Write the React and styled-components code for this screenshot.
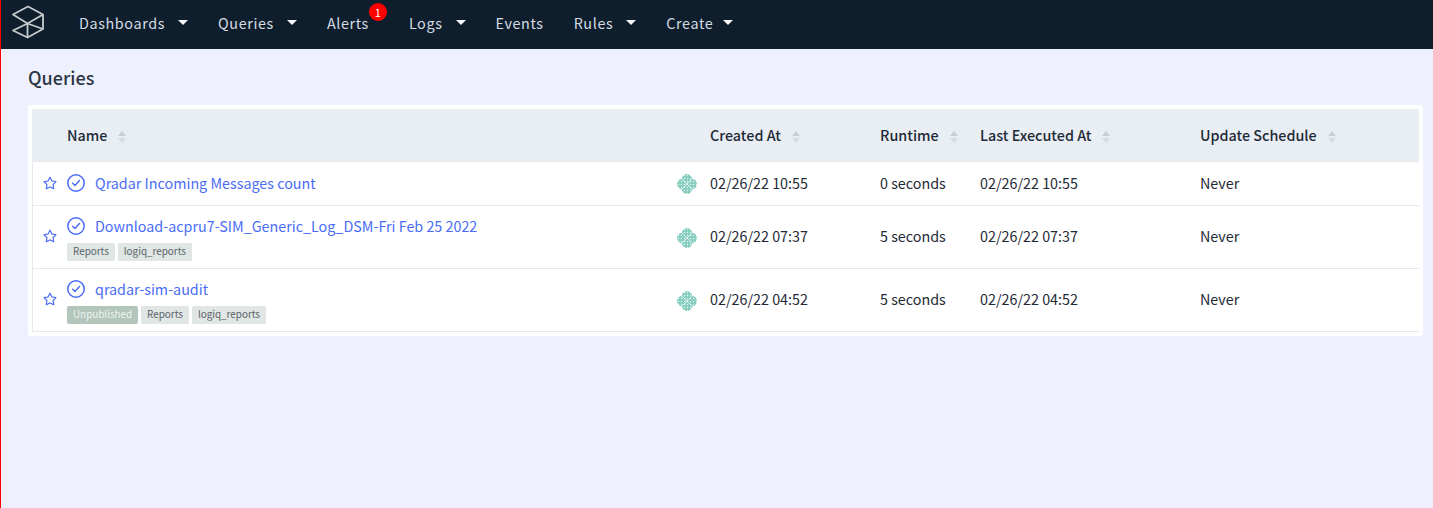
import styled, { createGlobalStyle } from "styled-components";
import { FaRegStar } from "react-icons/fa";

const GlobalStyle = createGlobalStyle`
  html, body {
    margin: 0;
    padding: 0;
    height: 100%;
  }
  body {
    background: #eef1fd;
    font-family: "Noto Sans CJK JP", "Noto Sans", sans-serif;
  }
`;

const menu = [
  { label: "Dashboards", caret: 13 },
  { label: "Queries", caret: 13 },
  { label: "Alerts", badge: 1 },
  { label: "Logs", caret: 13 },
  { label: "Events" },
  { label: "Rules", caret: 13 },
  { label: "Create", caret: 10 },
];

const queries = [
  {
    name: "Qradar Incoming Messages count",
    tags: [],
    created: "02/26/22 10:55",
    runtime: "0 seconds",
    executed: "02/26/22 10:55",
  },
  {
    name: "Download-acpru7-SIM_Generic_Log_DSM-Fri Feb 25 2022",
    tags: ["Reports", "logiq_reports"],
    created: "02/26/22 07:37",
    runtime: "5 seconds",
    executed: "02/26/22 07:37",
  },
  {
    name: "qradar-sim-audit",
    unpublished: true,
    tags: ["Reports", "logiq_reports"],
    created: "02/26/22 04:52",
    runtime: "5 seconds",
    executed: "02/26/22 04:52",
  },
];

function Logo() {
  return (
    <LogoSvg viewBox="0 0 34 34" fill="none" stroke="#c4cacd" strokeWidth="1.800" strokeLinejoin="round">
      <path d="M17 1.500 L32 9.500 L16.500 18.500 L2 9.500 Z" />
      <path d="M16.500 18.500 L2 25.500 L16.500 32.500 L32 24 L32 9.500" />
      <path d="M16.500 18.500 L16.500 32.500 M16.500 18.500 L32 24" />
    </LogoSvg>
  );
}

function SortIcon() {
  return (
    <SortSvg viewBox="0 0 8 12">
      <path d="M4 0 L8 5 L0 5 Z" fill="#c8ced6" />
      <path d="M0 7 L8 7 L4 12 Z" fill="#d6dbe1" />
    </SortSvg>
  );
}

function CheckCircle() {
  return (
    <CheckSvg viewBox="0 0 18 18" fill="none" stroke="#4a6cf7" strokeLinecap="round" strokeLinejoin="round">
      <circle cx="9" cy="9" r="8.200" strokeWidth="1.500" />
      <path d="M5.600 9.300 L8 11.500 L12.400 6.500" strokeWidth="1.400" />
    </CheckSvg>
  );
}

function Avatar() {
  return (
    <AvatarSvg viewBox="0 0 20 20">
      <defs>
        <pattern id="avatar-dots" width="3" height="3" patternUnits="userSpaceOnUse">
          <rect width="3" height="3" fill="#85cdbf" />
          <circle cx="1.500" cy="1.500" r="0.700" fill="#eaf6f3" />
        </pattern>
      </defs>
      <g fill="url(#avatar-dots)">
        <circle cx="10" cy="5.200" r="5.200" />
        <circle cx="10" cy="14.800" r="5.200" />
        <circle cx="5.200" cy="10" r="5.200" />
        <circle cx="14.800" cy="10" r="5.200" />
      </g>
      <path d="M4.500 4.500 L15.500 15.500 M15.500 4.500 L4.500 15.500" stroke="#fff" strokeWidth="0.700" />
    </AvatarSvg>
  );
}

export default function App() {
  return (
    <Page>
      <GlobalStyle />
      <Navbar>
        <Logo />
        <Menu>
          {menu.map((item) => (
            <MenuItem key={item.label} $badged={!!item.badge}>
              {item.label}
              {item.caret && <Caret $gap={item.caret} />}
              {item.badge && <Badge>{item.badge}</Badge>}
            </MenuItem>
          ))}
        </Menu>
      </Navbar>
      <Content>
        <PageTitle>Queries</PageTitle>
        <Card>
          <Table>
            <colgroup>
              <Col $width={35} />
              <col />
              <Col $width={170} />
              <Col $width={100} />
              <Col $width={220} />
              <Col $width={219} />
            </colgroup>
            <thead>
              <tr>
                <Th />
                <Th>Name<SortIcon /></Th>
                <Th>Created At<SortIcon /></Th>
                <Th>Runtime<SortIcon /></Th>
                <Th>Last Executed At<SortIcon /></Th>
                <Th>Update Schedule<SortIcon /></Th>
              </tr>
            </thead>
            <tbody>
              {queries.map((q) => {
                const hasTags = q.unpublished || q.tags.length > 0;
                return (
                  <Row key={q.name}>
                    <StarCell><FaRegStar /></StarCell>
                    <NameCell>
                      <NameInner>
                        <NameBlock $single={!hasTags}>
                          <TitleLine>
                            <CheckCircle />
                            <QueryLink>{q.name}</QueryLink>
                          </TitleLine>
                          {hasTags && (
                            <Tags>
                              {q.unpublished && <Tag $muted>Unpublished</Tag>}
                              {q.tags.map((t) => <Tag key={t}>{t}</Tag>)}
                            </Tags>
                          )}
                        </NameBlock>
                        <Avatar />
                      </NameInner>
                    </NameCell>
                    <Td>{q.created}</Td>
                    <Td>{q.runtime}</Td>
                    <Td>{q.executed}</Td>
                    <Td>Never</Td>
                  </Row>
                );
              })}
            </tbody>
          </Table>
        </Card>
      </Content>
    </Page>
  );
}

const Page = styled.div`
  min-height: 508px;
  border-left: 1px solid #ff0000;
  box-sizing: border-box;
`;

const Navbar = styled.nav`
  height: 49px;
  background: #0f1e2d;
  display: flex;
  align-items: flex-start;
  padding-left: 10px;
  box-sizing: border-box;
`;

const LogoSvg = styled.svg`
  width: 34px;
  height: 34px;
  margin-top: 5px;
`;

const Menu = styled.ul`
  display: flex;
  list-style: none;
  margin: 0 0 0 34px;
  padding: 0;
  gap: 30px;
`;

const MenuItem = styled.li`
  position: relative;
  display: flex;
  align-items: center;
  height: 44px;
  padding-right: ${(p) => (p.$badged ? "10px" : "0")};
  color: #d5dce3;
  font-size: 14.4px;
  letter-spacing: 0.6px;
`;

const Caret = styled.span`
  width: 0;
  height: 0;
  margin: 1px 0 0 ${(p) => p.$gap}px;
  border-left: 5.5px solid transparent;
  border-right: 5.5px solid transparent;
  border-top: 5.5px solid #f4f6f8;
`;

const Badge = styled.span`
  position: absolute;
  top: 3px;
  right: -8px;
  width: 18px;
  height: 18px;
  border-radius: 50%;
  background: #ff0000;
  color: #fff;
  font-size: 11px;
  letter-spacing: 0;
  line-height: 18px;
  text-align: center;
`;

const Content = styled.main`
  padding: 0 10px 0 27px;
`;

const PageTitle = styled.h1`
  margin: 0;
  padding-top: 15px;
  height: 41px;
  font-size: 18px;
  font-weight: 500;
  line-height: 26px;
  color: #2b3544;
`;

const Card = styled.div`
  background: #fff;
  border-radius: 3px;
  padding: 4px;
`;

const Table = styled.table`
  width: 100%;
  table-layout: fixed;
  border-collapse: separate;
  border-spacing: 0;
`;

const Col = styled.col`
  width: ${(p) => p.$width}px;
`;

const Th = styled.th`
  height: 50px;
  padding: 0 0 2px;
  background: #e9eef5;
  border-bottom: 1px solid #e6e8ec;
  text-align: left;
  font-size: 14.34px;
  font-weight: 500;
  color: #1f2a37;
`;

const SortSvg = styled.svg`
  width: 8px;
  height: 12px;
  margin-left: 11px;
  vertical-align: -2px;
`;

const Row = styled.tr`
  td {
    border-bottom: 1px solid #e6e8ec;
  }
`;

const Td = styled.td`
  padding: 0 0 3px;
  font-size: 14.34px;
  color: #1f2a37;
`;

const StarCell = styled.td`
  padding: 0 0 2px 10px;
  color: #4a6cf7;
  line-height: 1;
  border-left: 1px solid #e6e8ec;

  svg {
    display: block;
    width: 14px;
    height: 14px;
  }
`;

const NameCell = styled.td`
  padding: 0;
`;

const NameInner = styled.div`
  display: flex;
  align-items: center;
  justify-content: space-between;
  padding-right: 13px;
`;

const NameBlock = styled.div`
  padding: ${(p) => (p.$single ? "9px 0 10px" : "8px 0 7px")};
`;

const TitleLine = styled.div`
  display: flex;
  align-items: center;
  gap: 10px;
  height: 24px;
`;

const CheckSvg = styled.svg`
  width: 18px;
  height: 18px;
`;

const QueryLink = styled.a`
  padding-bottom: 2px;
  color: #4a6cf7;
  font-size: 14.34px;
`;

const Tags = styled.div`
  display: flex;
  gap: 3px;
  margin-top: 5px;
`;

const Tag = styled.span`
  height: 18px;
  padding: 0 6px;
  border-radius: 2px;
  background: ${(p) => (p.$muted ? "#b2c6bb" : "#e0e6e3")};
  color: ${(p) => (p.$muted ? "#eef3f0" : "#59636a")};
  font-size: 9.9px;
  line-height: 17px;
`;

const AvatarSvg = styled.svg`
  width: 20px;
  height: 20px;
  margin-top: 1px;
`;
